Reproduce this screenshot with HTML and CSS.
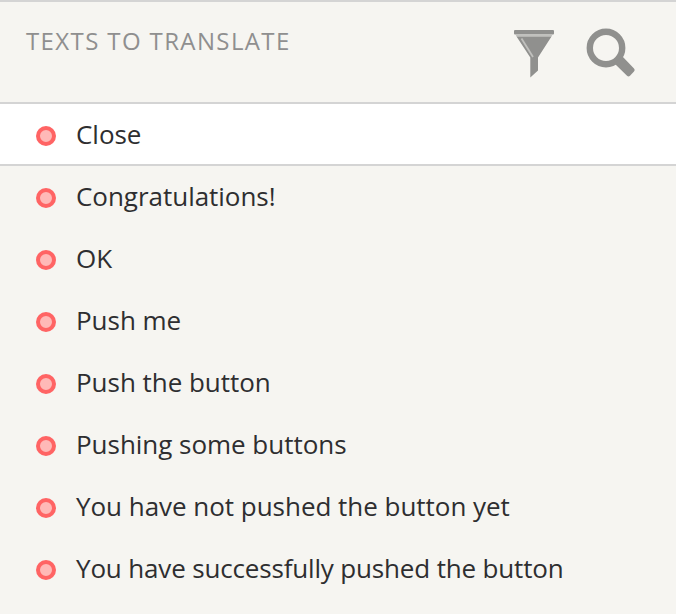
FILE: index.html
```html
<!DOCTYPE html>
<html lang="en">
<head>
<meta charset="utf-8">
<title>Texts to translate</title>
<link rel="stylesheet" href="styles.css">
</head>
<body>
<section class="panel">
  <header class="header">
    <h1 class="title">TEXTS TO TRANSLATE</h1>
    <div class="tools">
      <svg class="icon" viewBox="0 0 42 50" width="42" height="50"><rect x="1" y="2" width="40" height="4.500" rx="1" fill="#90908e"/><path d="M2.500 6.500H39.500L38.500 8.500H3.500Z" fill="#c0c0bd"/><path d="M3.500 8.500H38.500L25 29.500V42.500L17.300 49.500V29.500Z" fill="#90908e"/><path d="M8.500 10.500L20 29" stroke="#c0c0bd" stroke-width="1.800"/></svg>
      <svg class="icon" viewBox="0 0 50 50" width="50" height="50"><circle cx="20" cy="20" r="16.200" fill="none" stroke="#90908e" stroke-width="6.400"/><path d="M36 28L48 40.500Q49.500 42 48 43.500L44 47.800Q42.500 49.300 41 47.800L28.500 35.500Z" fill="#90908e"/></svg>
    </div>
  </header>
  <ul class="list">
    <li class="row selected"><span class="dot"></span><span class="label">Close</span></li>
    <li class="row"><span class="dot"></span><span class="label">Congratulations!</span></li>
    <li class="row"><span class="dot"></span><span class="label">OK</span></li>
    <li class="row"><span class="dot"></span><span class="label">Push me</span></li>
    <li class="row"><span class="dot"></span><span class="label">Push the button</span></li>
    <li class="row"><span class="dot"></span><span class="label">Pushing some buttons</span></li>
    <li class="row"><span class="dot"></span><span class="label">You have not pushed the button yet</span></li>
    <li class="row"><span class="dot"></span><span class="label tight">You have successfully pushed the button</span></li>
  </ul>
</section>
</body>
</html>
```
FILE: styles.css
```css
* { box-sizing: border-box; }
body { margin: 0; background: #f6f5f1; font-family: "Open Sans", sans-serif; }
.panel { height: 614px; overflow: hidden; border-top: 2px solid #d4d4d4; }
.header { display: flex; justify-content: space-between; height: 100px; padding: 22px 40px 0 26px; }
.title { margin: 0; font-size: 24px; line-height: 34px; font-weight: 400; letter-spacing: 1.38px; color: #8f8f8f; }
.tools { display: flex; gap: 31px; padding-top: 4px; }
.icon { display: block; }
.list { margin: 0; padding: 0; list-style: none; }
.row { display: flex; align-items: center; height: 62px; padding-left: 36px; gap: 20px; color: #2e2e30; font-size: 26px; line-height: 36px; }
.selected { height: 64px; margin-bottom: -1px; background: #fff; border-top: 2px solid #d4d4d4; border-bottom: 2px solid #d4d4d4; }
.dot { width: 20px; height: 20px; margin-top: 4px; border: 4px solid #ff6464; border-radius: 50%; background: #ffb9b7; }
.label { white-space: nowrap; letter-spacing: -0.03px; }
.tight { letter-spacing: -0.16px; }
```
